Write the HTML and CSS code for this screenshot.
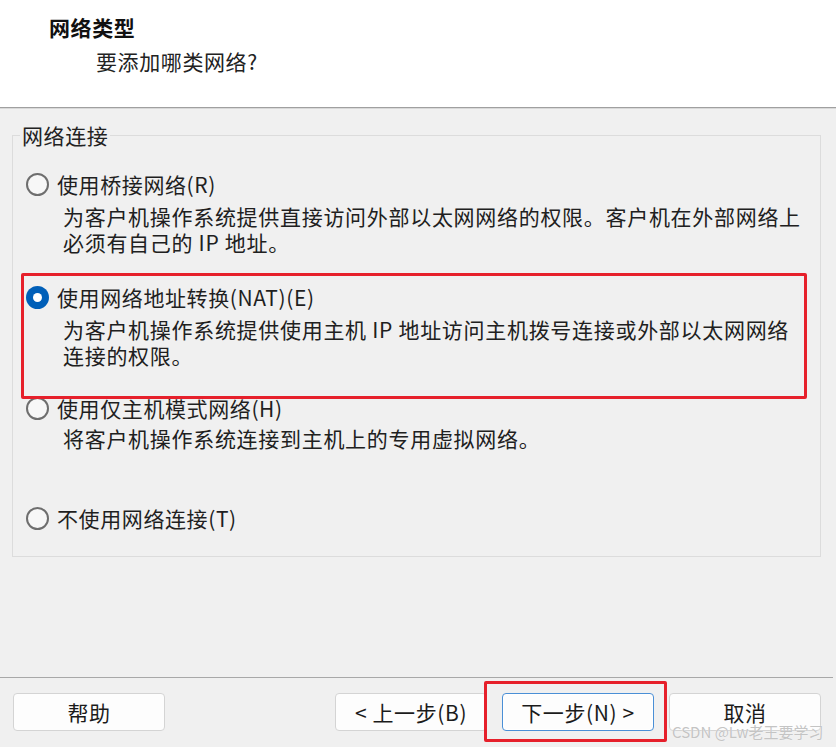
FILE: index.html
```html
<!DOCTYPE html>
<html lang="zh-CN">
<head>
<meta charset="utf-8">
<title>网络类型</title>
<link rel="stylesheet" href="styles.css">
</head>
<body>
<div class="window">
  <header class="header">
    <div class="title">网络类型</div>
    <div class="subtitle">要添加哪类网络?</div>
  </header>
  <main class="main">
    <fieldset class="group">
      <legend class="legend">网络连接</legend>
      <div class="option opt1">
        <div class="row"><span class="radio"></span><span class="label">使用桥接网络(R)</span></div>
        <div class="desc"><div class="line">为客户机操作系统提供直接访问外部以太网网络的权限。客户机在外部网络上</div><div class="line">必须有自己的 IP 地址。</div></div>
      </div>
      <div class="option opt2">
        <div class="row"><span class="radio checked"></span><span class="label">使用网络地址转换(NAT)(E)</span></div>
        <div class="desc"><div class="line">为客户机操作系统提供使用主机 IP 地址访问主机拨号连接或外部以太网网络</div><div class="line">连接的权限。</div></div>
      </div>
      <div class="option opt3">
        <div class="row"><span class="radio"></span><span class="label">使用仅主机模式网络(H)</span></div>
        <div class="desc desc3"><div class="line">将客户机操作系统连接到主机上的专用虚拟网络。</div></div>
      </div>
      <div class="option opt4">
        <div class="row"><span class="radio"></span><span class="label">不使用网络连接(T)</span></div>
      </div>
    </fieldset>
  </main>
  <footer class="footer">
    <button class="btn help">帮助</button>
    <div class="spacer"></div>
    <button class="btn">&lt; 上一步(B)</button>
    <button class="btn default">下一步(N) &gt;</button>
    <button class="btn">取消</button>
  </footer>
  <div class="mark mark-nat"></div>
  <div class="mark mark-next"></div>
  <div class="watermark">CSDN @Lw老王要学习</div>
</div>
</body>
</html>
```
FILE: styles.css
```css
* { box-sizing: border-box; }
html, body { margin: 0; padding: 0; }
body {
  width: 836px;
  height: 747px;
  overflow: hidden;
  background: #f0f0f0;
  font-family: "Noto Sans CJK SC", "Noto Sans", sans-serif;
  font-size: 21px;
  letter-spacing: 0.6px;
  color: #1b1b1b;
}
.window {
  position: relative;
  width: 836px;
  height: 747px;
  display: flex;
  flex-direction: column;
}
.header {
  height: 108px;
  background: #ffffff;
  border-bottom: 1px solid #a0a0a0;
  box-shadow: 0 1px 0 #d9d9d9;
  padding: 13px 0 0 49px;
  flex: none;
}
.title {
  font-weight: bold;
  line-height: 28px;
  height: 28px;
  color: #111;
}
.subtitle {
  margin-top: 6px;
  padding-left: 47px;
  line-height: 28px;
  color: #222;
}
.main {
  flex: none;
  height: 569px;
  padding-top: 13px;
}
.group {
  margin: 0 0 0 12px;
  width: 809px;
  height: 436px;
  border: 1px solid #dcdcdc;
  padding: 0;
  min-width: 0;
}
.legend {
  margin-left: 7px;
  padding: 0 2px;
  line-height: 28px;
  color: #222;
}
.opt1 { margin-top: 21px; }
.opt2 { margin-top: 28px; }
.opt3 { margin-top: 26px; }
.opt4 { margin-top: 53px; }
.row {
  display: flex;
  align-items: center;
  height: 28px;
  padding-left: 13px;
}
.radio {
  width: 23px;
  height: 23px;
  border: 2px solid #6e6e6e;
  border-radius: 50%;
  background: #f7f7f7;
  flex: none;
  margin-right: 8px;
}
.radio.checked {
  border: none;
  background: #005fb8;
  display: flex;
  align-items: center;
  justify-content: center;
}
.radio.checked::after {
  content: "";
  width: 9px;
  height: 9px;
  border-radius: 50%;
  background: #ffffff;
}
.label {
  line-height: 28px;
  white-space: nowrap;
  color: #1f1f1f;
}
.desc {
  margin-top: 5px;
  padding-left: 50px;
  letter-spacing: 0.7px;
  white-space: nowrap;
  color: #202020;
}
.line {
  height: 26px;
  line-height: 26px;
}
.desc3 { margin-top: 3px; }
.footer {
  flex: none;
  height: 70px;
  border-top: 1px solid #a8a8a8;
  margin-right: 3px;
  display: flex;
  align-items: flex-start;
  padding: 15px 12px 0 13px;
  gap: 15px;
}
.spacer { flex: 1; }
.btn {
  width: 152px;
  height: 38px;
  background: #fdfdfd;
  border: 1px solid #d4d4d4;
  border-radius: 4px;
  font-family: inherit;
  font-size: 21px;
  letter-spacing: 0.6px;
  color: #1b1b1b;
  padding: 0;
  line-height: 36px;
}
.btn.default {
  border: 1px solid #4a8fd6;
  box-shadow: inset 0 0 0 1px #ffffff;
}
.mark {
  position: absolute;
  border: 3px solid #e6202b;
  border-radius: 2px;
  pointer-events: none;
}
.mark-nat {
  left: 21px;
  top: 273px;
  width: 786px;
  height: 126px;
}
.mark-next {
  left: 484px;
  top: 681px;
  width: 183px;
  height: 61px;
}
.watermark {
  position: absolute;
  left: 672px;
  top: 722px;
  font-size: 15px;
  letter-spacing: 0;
  line-height: 20px;
  color: #c4c4c4;
  text-shadow: 0 0 1px #ffffff;
  white-space: nowrap;
}
```
